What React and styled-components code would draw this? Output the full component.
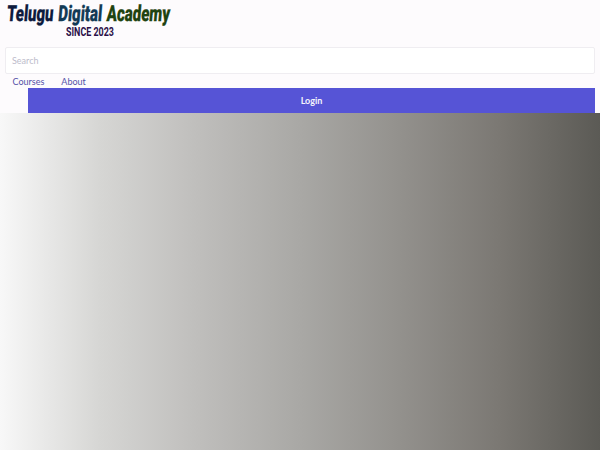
import React from "react";
import styled, { createGlobalStyle } from "styled-components";

const Global = createGlobalStyle`
  html, body { margin: 0; padding: 0; background: #fdfbfd; }
  body { width: 600px; height: 450px; overflow: hidden; font-family: Lato, "Liberation Sans", sans-serif; }
`;
const Page = styled.div`
  display: flex;
  flex-direction: column;
  width: 600px;
  height: 450px;
  background: #fdfbfd;
`;
const Logo = styled.div`
  display: flex;
  flex-direction: column;
  height: 47px;
  padding: 3px 0 0 8px;
  box-sizing: border-box;
`;
const LogoTitle = styled.div`
  display: flex;
  gap: 7px;
  width: 270px;
  height: 20px;
  transform: scaleX(0.68) skewX(-7deg);
  transform-origin: left top;
  font: 900 22px/21px Roboto, "Liberation Sans", sans-serif;
  -webkit-text-stroke: 0.3px currentColor;
  white-space: nowrap;
`;
const LogoWord = styled.span`
  color: ${(p) => p.$color};
`;
const LogoSince = styled.div`
  margin: 0 0 0 58px;
  width: 80px;
  transform: scaleX(0.66);
  transform-origin: left top;
  font: 700 13.5px/16px Roboto, "Liberation Sans", sans-serif;
  color: #2a1048;
  white-space: nowrap;
`;
const SearchWrap = styled.div`
  padding: 0 5px;
`;
const SearchInput = styled.input`
  display: block;
  width: 100%;
  height: 27px;
  box-sizing: border-box;
  padding: 0 6px;
  background: #fff;
  border: 1px solid #efedf1;
  border-radius: 2px;
  outline: none;
  font: 400 9px Lato, "Liberation Sans", sans-serif;
  &::placeholder { color: #bdbccb; opacity: 1; }
`;
const Nav = styled.nav`
  display: flex;
  gap: 17px;
  height: 14px;
  box-sizing: border-box;
  padding: 1px 0 0 12.5px;
  align-items: center;
`;
const NavLink = styled.a`
  font: 400 9px/13px Lato, "Liberation Sans", sans-serif;
  color: #5553a8;
`;
const LoginRow = styled.div`
  padding: 0 5px 0 28px;
`;
const LoginButton = styled.button`
  display: block;
  width: 100%;
  height: 24.5px;
  border: 0;
  padding: 0;
  background: #5654d6;
  color: #f4f3fb;
  font: 700 9px Lato, "Liberation Sans", sans-serif;
`;
const Hero = styled.div`
  flex: 1;
  background: linear-gradient(to right, #f8f8f8 0%, #d6d6d4 16.6%, #bfbebc 33%, #a9a8a5 50%, #93918d 66.6%, #7b7873 83.3%, #5b5a55 100%);
`;

export default function App() {
  return (
    <Page>
      <Global />
      <Logo>
        <LogoTitle>
          <LogoWord $color="#0d1a3d">Telugu</LogoWord>
          <LogoWord $color="#123a55">Digital</LogoWord>
          <LogoWord $color="#1f4310">Academy</LogoWord>
        </LogoTitle>
        <LogoSince>SINCE 2023</LogoSince>
      </Logo>
      <SearchWrap>
        <SearchInput placeholder="Search" />
      </SearchWrap>
      <Nav>
        <NavLink>Courses</NavLink>
        <NavLink>About</NavLink>
      </Nav>
      <LoginRow>
        <LoginButton>Login</LoginButton>
      </LoginRow>
      <Hero />
    </Page>
  );
}
